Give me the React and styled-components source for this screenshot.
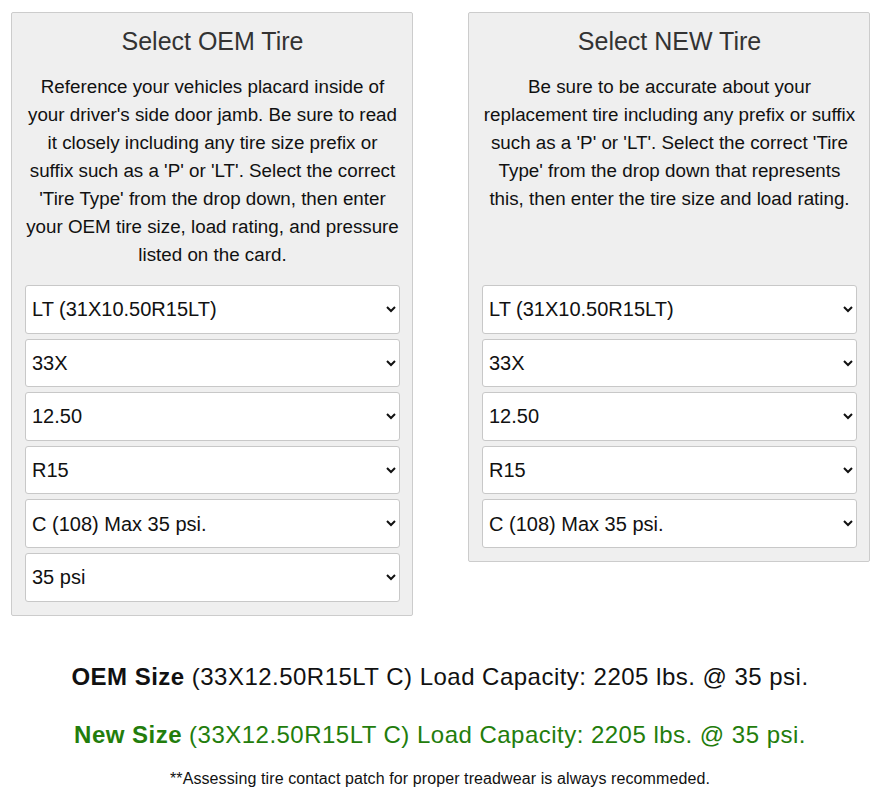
import styled, { createGlobalStyle } from "styled-components";

const GlobalStyle = createGlobalStyle`
  body {
    margin: 0;
    background: #fff;
    font-family: "Liberation Sans", Arial, sans-serif;
    color: #111;
  }
`;

const Page = styled.div`
  width: 880px;
  padding-top: 12px;
`;
const Panels = styled.div`
  display: flex;
  align-items: flex-start;
  gap: 55px;
  padding-left: 11px;
`;
const Panel = styled.div`
  box-sizing: border-box;
  width: 402px;
  background: #efefef;
  border: 1px solid #cccccc;
  border-radius: 2px;
  padding: 14px 12px 13px 13px;
`;
const Title = styled.h2`
  margin: 0 0 18px;
  font-size: 25px;
  line-height: 28px;
  font-weight: 400;
  color: #333;
  text-align: center;
`;
const Description = styled.p`
  margin: 0 -6px 16px;
  min-height: 196px;
  font-size: 18.8px;
  line-height: 28px;
  color: #111;
  text-align: center;
`;
const Fields = styled.div`
  display: flex;
  flex-direction: column;
  gap: 5px;
`;
const Select = styled.select`
  box-sizing: border-box;
  width: 100%;
  height: 48.6px;
  padding: 0 2px;
  background: #fff;
  border: 1px solid #c8c8c8;
  border-radius: 3px;
  font-family: "Liberation Sans", Arial, sans-serif;
  font-size: 20px;
  color: #111;
`;
const Results = styled.div`
  margin-top: 47px;
  text-align: center;
`;
const SizeLine = styled.p`
  margin: 0 0 30px;
  font-size: 24px;
  line-height: 28px;
  letter-spacing: 0.48px;
  color: ${(p) => p.$color};
`;
const Note = styled.p`
  margin: -9px 0 0;
  font-size: 16px;
  line-height: 18px;
  letter-spacing: 0.1px;
  color: #111;
`;

const Field = ({ value }) => (
  <Select defaultValue={value}>
    <option value={value}>{value}</option>
  </Select>
);

const Lines = ({ lines }) =>
  lines.map((line, i) => (
    <span key={i}>
      {line}
      {i < lines.length - 1 && <br />}
    </span>
  ));

const oemText = [
  "Reference your vehicles placard inside of",
  "your driver's side door jamb. Be sure to read",
  "it closely including any tire size prefix or",
  "suffix such as a 'P' or 'LT'. Select the correct",
  "'Tire Type' from the drop down, then enter",
  "your OEM tire size, load rating, and pressure",
  "listed on the card.",
];
const newText = [
  "Be sure to be accurate about your",
  "replacement tire including any prefix or suffix",
  "such as a 'P' or 'LT'. Select the correct 'Tire",
  "Type' from the drop down that represents",
  "this, then enter the tire size and load rating.",
];

const oemFields = [
  "LT (31X10.50R15LT)",
  "33X",
  "12.50",
  "R15",
  "C (108) Max 35 psi.",
  "35 psi",
];
const newFields = oemFields.slice(0, 5);

export default function App() {
  return (
    <Page>
      <GlobalStyle />
      <Panels>
        <Panel>
          <Title>Select OEM Tire</Title>
          <Description>
            <Lines lines={oemText} />
          </Description>
          <Fields>
            {oemFields.map((v) => (
              <Field key={v} value={v} />
            ))}
          </Fields>
        </Panel>
        <Panel>
          <Title>Select NEW Tire</Title>
          <Description>
            <Lines lines={newText} />
          </Description>
          <Fields>
            {newFields.map((v) => (
              <Field key={v} value={v} />
            ))}
          </Fields>
        </Panel>
      </Panels>
      <Results>
        <SizeLine $color="#111">
          <b>OEM Size</b> (33X12.50R15LT C) Load Capacity: 2205 lbs. @ 35 psi.
        </SizeLine>
        <SizeLine $color="#237d0c">
          <b>New Size</b> (33X12.50R15LT C) Load Capacity: 2205 lbs. @ 35 psi.
        </SizeLine>
        <Note>
          **Assessing tire contact patch for proper treadwear is always
          recommeded.
        </Note>
      </Results>
    </Page>
  );
}
